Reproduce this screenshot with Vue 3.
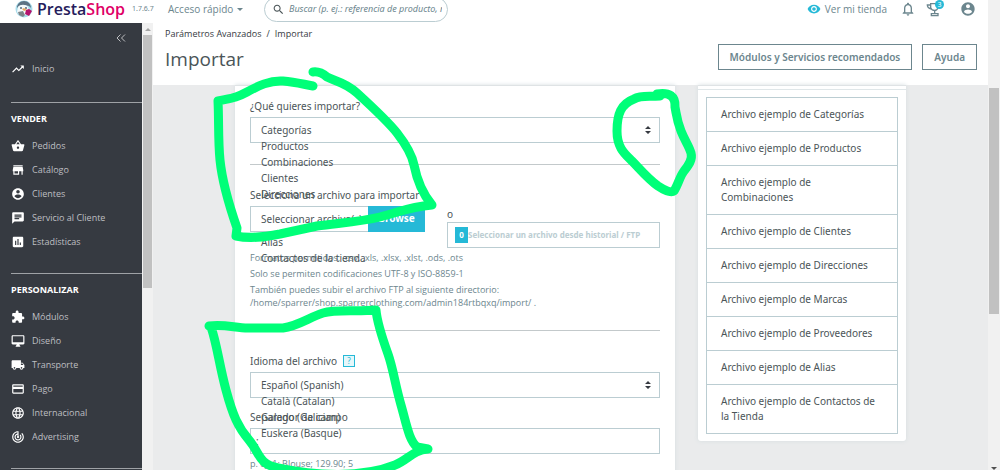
<script setup>
import { ref } from 'vue'

const icons = {
  trend: 'M16 6l2.29 2.29-4.88 4.88-4-4L2 16.59 3.41 18l6-6 4 4 6.3-6.29L22 12V6z',
  basket: 'M17.21 9l-4.38-6.56c-.19-.28-.51-.42-.83-.42-.32 0-.64.14-.83.43L6.79 9H2c-.55 0-1 .45-1 1 0 .09.01.18.04.27l2.54 9.27c.23.84 1 1.46 1.92 1.46h13c.92 0 1.69-.62 1.93-1.46l2.54-9.27L23 10c0-.55-.45-1-1-1h-4.79zM9 9l3-4.4L15 9H9zm3 8c-1.1 0-2-.9-2-2s.9-2 2-2 2 .9 2 2-.9 2-2 2z',
  store: 'M20 4H4v2h16V4zm1 10v-2l-1-5H4l-1 5v2h1v6h10v-6h4v6h2v-6h1zm-9 4H6v-4h6v4z',
  account: 'M12 2C6.48 2 2 6.48 2 12s4.48 10 10 10 10-4.48 10-10S17.52 2 12 2zm0 3c1.66 0 3 1.34 3 3s-1.34 3-3 3-3-1.34-3-3 1.34-3 3-3zm0 14.2c-2.5 0-4.71-1.28-6-3.22.03-1.99 4-3.08 6-3.08 1.99 0 5.97 1.09 6 3.08-1.29 1.94-3.5 3.22-6 3.22z',
  chat: 'M20 2H4c-1.1 0-1.99.9-1.99 2L2 22l4-4h14c1.1 0 2-.9 2-2V4c0-1.1-.9-2-2-2zM6 9h12v2H6V9zm8 5H6v-2h8v2zm4-6H6V6h12v2z',
  stats: 'M19 3H5c-1.1 0-2 .9-2 2v14c0 1.1.9 2 2 2h14c1.1 0 2-.9 2-2V5c0-1.1-.9-2-2-2zM9 17H7v-7h2v7zm4 0h-2V7h2v10zm4 0h-2v-4h2v4z',
  puzzle: 'M20.5 11H19V7c0-1.1-.9-2-2-2h-4V3.5C13 2.12 11.88 1 10.5 1S8 2.12 8 3.5V5H4c-1.1 0-1.99.9-1.99 2v3.8H3.5c1.49 0 2.7 1.21 2.7 2.7s-1.21 2.7-2.7 2.7H2V20c0 1.1.9 2 2 2h3.8v-1.5c0-1.49 1.21-2.7 2.7-2.7 1.49 0 2.7 1.21 2.7 2.7V22H17c1.1 0 2-.9 2-2v-4h1.5c1.38 0 2.5-1.12 2.5-2.5S21.88 11 20.5 11z',
  desktop: 'M21 2H3c-1.1 0-2 .9-2 2v12c0 1.1.9 2 2 2h7l-2 3v1h8v-1l-2-3h7c1.1 0 2-.9 2-2V4c0-1.1-.9-2-2-2zm0 12H3V4h18v10z',
  truck: 'M20 8h-3V4H3c-1.1 0-2 .9-2 2v11h2c0 1.66 1.34 3 3 3s3-1.34 3-3h6c0 1.66 1.34 3 3 3s3-1.34 3-3h2v-5l-3-4zM6 18.5c-.83 0-1.5-.67-1.5-1.5s.67-1.5 1.5-1.5 1.5.67 1.5 1.5-.67 1.5-1.5 1.5zm13.5-9l1.96 2.5H17V9.5h2.5zm-1.5 9c-.83 0-1.5-.67-1.5-1.5s.67-1.5 1.5-1.5 1.5.67 1.5 1.5-.67 1.5-1.5 1.5z',
  card: 'M20 4H4c-1.11 0-1.99.89-1.99 2L2 18c0 1.11.89 2 2 2h16c1.11 0 2-.89 2-2V6c0-1.11-.89-2-2-2zm0 14H4v-6h16v6zm0-10H4V6h16v2z',
  globe: 'M11.99 2C6.47 2 2 6.48 2 12s4.47 10 9.99 10C17.52 22 22 17.52 22 12S17.52 2 11.99 2zm6.93 6h-2.95c-.32-1.25-.78-2.45-1.38-3.56 1.84.63 3.37 1.91 4.33 3.56zM12 4.04c.83 1.2 1.48 2.53 1.91 3.96h-3.82c.43-1.43 1.08-2.76 1.91-3.96zM4.26 14C4.1 13.36 4 12.69 4 12s.1-1.36.26-2h3.38c-.08.66-.14 1.32-.14 2 0 .68.06 1.34.14 2H4.26zm.82 2h2.95c.32 1.25.78 2.45 1.38 3.56-1.84-.63-3.37-1.9-4.33-3.56zm2.95-8H5.08c.96-1.66 2.49-2.93 4.33-3.56C8.81 5.55 8.35 6.75 8.03 8zM12 19.96c-.83-1.2-1.48-2.53-1.91-3.96h3.82c-.43 1.43-1.08 2.76-1.91 3.96zM14.34 14H9.66c-.09-.66-.16-1.32-.16-2 0-.68.07-1.35.16-2h4.68c.09.65.16 1.32.16 2 0 .68-.07 1.34-.16 2zm.25 5.56c.6-1.11 1.06-2.31 1.38-3.56h2.95c-.96 1.65-2.49 2.93-4.33 3.56zM16.36 14c.08-.66.14-1.32.14-2 0-.68-.06-1.34-.14-2h3.38c.16.64.26 1.31.26 2s-.1 1.36-.26 2h-3.38z',
  target: 'M19.07 4.93l-1.41 1.41C19.1 7.79 20 9.79 20 12c0 4.42-3.58 8-8 8s-8-3.58-8-8c0-4.08 3.05-7.44 7-7.93v2.02C8.16 6.57 6 9.03 6 12c0 3.31 2.69 6 6 6s6-2.69 6-6c0-1.66-.67-3.16-1.76-4.24l-1.41 1.41C15.55 9.9 16 10.9 16 12c0 2.21-1.79 4-4 4s-4-1.79-4-4c0-1.86 1.28-3.41 3-3.86v2.14c-.6.35-1 .98-1 1.72 0 1.1.9 2 2 2s2-.9 2-2c0-.74-.4-1.38-1-1.72V2h-1C6.48 2 2 6.48 2 12s4.48 10 10 10 10-4.48 10-10c0-2.76-1.12-5.26-2.93-7.07z',
  eye: 'M12 4.5C7 4.5 2.73 7.61 1 12c1.73 4.39 6 7.5 11 7.5s9.27-3.11 11-7.5c-1.73-4.39-6-7.5-11-7.5zM12 17c-2.76 0-5-2.24-5-5s2.24-5 5-5 5 2.24 5 5-2.24 5-5 5zm0-8c-1.66 0-3 1.34-3 3s1.34 3 3 3 3-1.34 3-3-1.34-3-3-3z',
  bell: 'M12 22c1.1 0 2-.9 2-2h-4c0 1.1.9 2 2 2zm6-6v-5c0-3.07-1.63-5.64-4.5-6.32V4c0-.83-.67-1.5-1.5-1.5s-1.5.67-1.5 1.5v.68C7.64 5.36 6 7.92 6 11v5l-2 2v1h16v-1l-2-2zm-2 1H8v-6c0-2.48 1.51-4.5 4-4.5s4 2.02 4 4.5v6z',
  search: 'M15.5 14h-.79l-.28-.27C15.41 12.59 16 11.11 16 9.5 16 5.91 13.09 3 9.5 3S3 5.91 3 9.5 5.91 16 9.5 16c1.61 0 3.09-.59 4.23-1.57l.27.28v.79l5 4.99L20.49 19l-4.99-5zm-6 0C7.01 14 5 11.99 5 9.5S7.01 5 9.5 5 14 7.01 14 9.5 11.99 14 9.5 14z'
}

const menu = [
  {
    title: 'VENDER',
    items: [
      { icon: 'basket', label: 'Pedidos' },
      { icon: 'store', label: 'Catálogo' },
      { icon: 'account', label: 'Clientes' },
      { icon: 'chat', label: 'Servicio al Cliente' },
      { icon: 'stats', label: 'Estadísticas' }
    ]
  },
  {
    title: 'PERSONALIZAR',
    items: [
      { icon: 'puzzle', label: 'Módulos' },
      { icon: 'desktop', label: 'Diseño' },
      { icon: 'truck', label: 'Transporte' },
      { icon: 'card', label: 'Pago' },
      { icon: 'globe', label: 'Internacional' },
      { icon: 'target', label: 'Advertising' }
    ]
  }
]

const entities = ['Categorías', 'Productos', 'Combinaciones', 'Clientes', 'Direcciones', 'Marcas', 'Proveedores', 'Alias', 'Contactos de la tienda']
const languages = ['Español (Spanish)', 'Català (Catalan)', 'Galego (Galician)', 'Euskera (Basque)']
const samples = ['Categorías', 'Productos', 'Combinaciones', 'Clientes', 'Direcciones', 'Marcas', 'Proveedores', 'Alias', 'Contactos de la Tienda']

const entity = ref(entities[0])
const language = ref(languages[0])
const separator = ref(';')
</script>

<template>
  <div class="page">
    <div class="app">
      <header class="topbar">
        <a class="brand" href="#">
          <svg class="mascot" viewBox="0 0 18 18" aria-hidden="true">
            <circle cx="9" cy="9" r="8.5" fill="#a9dceb" />
            <path d="M2 8C2 4 5 1 9 1s7 3 7 7l-2-2-5-1-5 1z" fill="#5d7384" />
            <path d="M3 7c2-3 8-3 10 0l1 4-3 4H5l-3-3z" fill="#f4fafb" />
            <circle cx="6" cy="8" r="1" fill="#54687a" />
            <circle cx="11" cy="8" r="1" fill="#54687a" />
            <path d="M7 9l2-1 3 2-3 1z" fill="#e8a860" />
            <path d="M3 12l5-1 2 4-2 2-4-2z" fill="#7d8388" />
            <path d="M11 10l3-1 3 2-3 5-4-2z" fill="#b5136d" />
          </svg>
          <span class="wordmark">Presta<span class="shop">Shop</span></span>
        </a>
        <span class="version">1.7.6.7</span>
        <button class="quick" type="button">Acceso rápido <span class="caret"></span></button>
        <form class="search" role="search" @submit.prevent>
          <svg class="search-icon" viewBox="0 0 24 24" aria-hidden="true"><path :d="icons.search" /></svg>
          <input type="text" aria-label="Buscar" placeholder="Buscar (p. ej.: referencia de producto, nombre" />
        </form>
        <a class="shop-link" href="#">
          <svg viewBox="0 0 24 24" aria-hidden="true"><path :d="icons.eye" /></svg>Ver mi tienda
        </a>
        <button class="tool" type="button" aria-label="Notificaciones">
          <svg viewBox="0 0 24 24" aria-hidden="true"><path :d="icons.bell" /></svg>
        </button>
        <button class="tool" type="button" aria-label="Logros">
          <svg class="trophy" viewBox="0 0 24 24" aria-hidden="true">
            <path d="M7 4h10l1 6c-1 3-3 4-5 4s-5-1-6-4zM7 6H2c0 4 2 5 6 6M13 14v5M8 22v-3h10v3z" />
          </svg>
          <span class="badge">3</span>
        </button>
        <button class="tool account" type="button" aria-label="Cuenta">
          <svg viewBox="0 0 24 24" aria-hidden="true"><path :d="icons.account" /></svg>
        </button>
      </header>

      <div class="body">
        <nav class="sidebar" aria-label="Menú principal">
          <button class="collapse" type="button" aria-label="Contraer menú">
            <svg viewBox="0 0 10 8" aria-hidden="true"><path d="M4.500.5L1 4l3.500 3.500M9 .5L5.500 4 9 7.500" /></svg>
          </button>
          <a class="item home" href="#">
            <svg viewBox="0 0 24 24" aria-hidden="true"><path :d="icons.trend" /></svg>Inicio
          </a>
          <section v-for="group in menu" :key="group.title" class="group">
            <h2>{{ group.title }}</h2>
            <ul>
              <li v-for="item in group.items" :key="item.label">
                <a class="item" href="#">
                  <svg viewBox="0 0 24 24" aria-hidden="true"><path :d="icons[item.icon]" /></svg>{{ item.label }}
                </a>
              </li>
            </ul>
          </section>
          <div class="group"></div>
        </nav>
        <div class="side-scroll" aria-hidden="true">
          <span class="arrow up"></span>
          <span class="side-thumb"></span>
        </div>

        <main class="main">
          <div class="heading">
            <div>
              <nav class="crumbs" aria-label="Ruta">
                <a href="#">Parámetros Avanzados</a><span>/</span><a href="#">Importar</a>
              </nav>
              <h1>Importar</h1>
            </div>
            <div class="actions">
              <button type="button">Módulos y Servicios recomendados</button>
              <button type="button">Ayuda</button>
            </div>
          </div>

          <div class="content">
            <form class="card form" @submit.prevent>
              <div class="field">
                <label for="entity">¿Qué quieres importar?</label>
                <div class="select">
                  <select id="entity" v-model="entity">
                    <option v-for="name in entities" :key="name">{{ name }}</option>
                  </select>
                  <svg viewBox="0 0 6 8" aria-hidden="true"><path d="M0 3l3-3 3 3zM0 5h6L3 8z" /></svg>
                  <ul class="spill">
                    <li v-for="name in entities.slice(1)" :key="name">{{ name }}</li>
                  </ul>
                </div>
              </div>
              <hr />
              <div class="field">
                <label for="file">Selecciona un archivo para importar</label>
                <div class="sources">
                  <div class="file">
                    <input id="file" type="file" />
                    <span class="file-name">Seleccionar archivo(s)</span>
                    <span class="browse">Browse</span>
                  </div>
                  <div class="history">
                    <span class="or">o</span>
                    <button type="button"><span class="count">0</span><span class="history-text">Seleccionar un archivo desde historial / FTP</span></button>
                  </div>
                </div>
                <p>Formatos permitidos: .csv, .xls, .xlsx, .xlst, .ods, .ots</p>
                <p>Solo se permiten codificaciones UTF-8 y ISO-8859-1</p>
                <p>También puedes subir el archivo FTP al siguiente directorio:<br />/home/sparrer/shop.sparrerclothing.com/admin184rtbqxq/import/ .</p>
              </div>
              <hr />
              <div class="field">
                <div class="label-row">
                  <label for="language">Idioma del archivo</label>
                  <button class="help" type="button" aria-label="Ayuda sobre el idioma">?</button>
                </div>
                <div class="select">
                  <select id="language" v-model="language">
                    <option v-for="name in languages" :key="name">{{ name }}</option>
                  </select>
                  <svg viewBox="0 0 6 8" aria-hidden="true"><path d="M0 3l3-3 3 3zM0 5h6L3 8z" /></svg>
                  <ul class="spill">
                    <li v-for="name in languages.slice(1)" :key="name">{{ name }}</li>
                  </ul>
                </div>
              </div>
              <div class="field next">
                <label for="separator">Separador de campo</label>
                <input id="separator" v-model="separator" class="text" type="text" />
                <p>p. ej. 1; Blouse; 129.90; 5</p>
              </div>
            </form>

            <aside class="card samples">
              <ul>
                <li v-for="name in samples" :key="name"><a href="#">Archivo ejemplo de {{ name }}</a></li>
              </ul>
            </aside>
          </div>
        </main>
      </div>
    </div>

    <div class="page-scroll" aria-hidden="true">
      <span class="page-thumb"></span>
      <span class="arrow down"></span>
    </div>

    <svg class="marker" viewBox="0 0 1000 470" aria-hidden="true">
      <path d="M313 86C302 84 296 82 283 81S258 86 247 92S232 98 218 101C219 120 218 140 220 160S229 205 237 228L236 236C250 239 264 237 280 234L317 226C338 223 360 222 380 217S408 207 432 205C420 191 416 175 414 165S404 142 397 133S369 104 357 93S337 82 327 77Q320 71 313 72" />
      <path d="M657 94Q676 91 675 107C677 118 677 121 681 131S689 146 691 153S688 166 684 171S678 185 674 191Q670 194 658 186C648 179 639 168 632 161S617 148 617 131S621 104 634 99C641 95 648 97 660 96" />
      <path d="M209 326C225 324 235 328 248 328H283C298 326 310 317 323 313S357 312 376 310C377 322 383 340 388 354S395 384 401 405S409 440 417 447L428 449C413 450 408 460 395 465C363 478 315 476 278 468C258 464 260 453 249 440S233 416 226 390S217 344 211 327" />
    </svg>
  </div>
</template>

<style>
body {
  margin: 0;
  overflow: hidden;
}
</style>

<style scoped>
* {
  box-sizing: border-box;
}
.page {
  position: relative;
  display: flex;
  height: 100vh;
  overflow: hidden;
  font-family: "Noto Sans", "Open Sans", sans-serif;
  font-size: 10px;
  line-height: 16px;
  color: #4b5558;
  background: #fff;
}
button,
input,
select {
  font: inherit;
  color: inherit;
}
button {
  padding: 0;
  border: 0;
  background: none;
}
a {
  color: inherit;
  text-decoration: none;
}
ul {
  margin: 0;
  padding: 0;
  list-style: none;
}
h1,
h2,
p {
  margin: 0;
}
.app {
  display: flex;
  flex: 1;
  flex-direction: column;
  min-width: 0;
}
.topbar {
  display: flex;
  flex: none;
  align-items: center;
  height: 23px;
  padding: 0 12px 5px 15px;
  color: #6c868e;
  font-size: 9px;
}
.brand {
  display: flex;
  align-items: center;
  gap: 4px;
  width: 117px;
}
.mascot {
  flex: none;
  width: 18px;
  height: 18px;
}
.wordmark {
  color: #251b5b;
  font-family: "Open Sans", sans-serif;
  font-size: 16px;
  font-weight: 600;
  line-height: 18px;
}
.shop {
  color: #df0067;
}
.version {
  width: 36px;
  font-size: 7px;
}
.quick {
  display: flex;
  align-items: center;
  gap: 4px;
  width: 96px;
  font-family: "Open Sans", sans-serif;
  font-size: 10px;
  white-space: nowrap;
}
.caret {
  border: 3px solid transparent;
  border-top-color: #6c868e;
  border-bottom: 0;
}
.search {
  display: flex;
  flex: none;
  align-items: center;
  gap: 4px;
  width: 184px;
  height: 25px;
  padding: 0 5px 0 7px;
  border: 1px solid #bbcdd2;
  border-radius: 13px;
}
.search-icon {
  flex: none;
  width: 13px;
  height: 13px;
  fill: #4b5558;
}
.search input {
  flex: 1;
  min-width: 0;
  padding: 0;
  border: 0;
  outline: 0;
  background: none;
  font-style: italic;
}
.search input::placeholder {
  color: #6c868e;
}
.shop-link {
  display: flex;
  align-items: center;
  gap: 4px;
  margin-left: auto;
  margin-right: 13px;
  font-family: "Open Sans", sans-serif;
  font-size: 10px;
  white-space: nowrap;
}
.shop-link svg {
  width: 14px;
  height: 14px;
  fill: #25b9d7;
}
.tool {
  position: relative;
  display: flex;
  margin-right: 10px;
}
.tool svg {
  width: 16px;
  height: 16px;
  fill: #6c868e;
}
.tool .trophy {
  fill: none;
  stroke: #6c868e;
  stroke-width: 2;
}
.tool.account {
  margin: 0 0 0 8px;
}
.badge {
  position: absolute;
  top: -1px;
  right: -2px;
  width: 9px;
  height: 9px;
  border-radius: 50%;
  background: #25b9d7;
  color: #fff;
  font-size: 7px;
  line-height: 9px;
  text-align: center;
}
.body {
  display: flex;
  flex: 1;
  min-height: 0;
}
.sidebar {
  display: flex;
  flex: none;
  flex-direction: column;
  width: 142px;
  padding-left: 11px;
  overflow: hidden;
  background: #363a41;
  color: #bebfc2;
  font-family: "Open Sans", sans-serif;
  font-size: 9px;
}
.sidebar > * {
  flex: none;
}
.collapse {
  align-self: flex-end;
  height: 32px;
  margin: 0 16px 2px 0;
}
.collapse svg {
  width: 10px;
  height: 8px;
  fill: none;
  stroke: #bebfc2;
}
.item {
  display: flex;
  align-items: center;
  gap: 7px;
  height: 24px;
}
.item svg {
  width: 14px;
  height: 14px;
  fill: #fff;
}
.home {
  margin-bottom: 21px;
}
.group {
  padding: 8px 0 19px;
  border-top: 1px solid #9fa2a6;
}
.group h2 {
  margin-bottom: 7px;
  color: #fff;
  font-size: 9px;
  line-height: 16px;
}
.side-scroll {
  flex: none;
  width: 11px;
  background: #f1f1f1;
}
.side-thumb {
  display: block;
  height: 253px;
  margin: 0 1px;
  background: #c1c1c1;
}
.arrow {
  display: block;
  width: 0;
  height: 0;
  border: 3px solid transparent;
}
.arrow.up {
  margin: 2px auto 4px;
  border-bottom-color: #a3a3a3;
}
.arrow.down {
  margin: auto auto 0;
  border-width: 3px 3px 0;
  border-top-color: #505050;
}
.main {
  flex: 1;
  min-width: 0;
  overflow: hidden;
  background: #eaebec;
}
.heading {
  display: flex;
  justify-content: space-between;
  height: 62px;
  padding: 3px 11px 0 12px;
  background: #fff;
}
.crumbs {
  display: flex;
  gap: 5px;
  color: #363a41;
  font-family: "Open Sans", sans-serif;
  font-size: 9px;
}
h1 {
  font-family: "Open Sans", sans-serif;
  font-size: 19px;
  font-weight: 400;
  line-height: 34px;
}
.actions {
  display: flex;
  gap: 10px;
  margin-top: 18px;
}
.actions button {
  height: 26px;
  padding: 0 11px;
  border: 1px solid #6c868e;
  color: #6c868e;
  font-weight: 600;
}
.content {
  display: grid;
  grid-template-columns: 440fr 208fr;
  align-items: start;
  gap: 23px;
  padding: 0 82px;
}
.card {
  min-width: 0;
  border-top: 1px solid #dfe3e5;
  background: #fff;
  box-shadow: 0 0 4px #d5dde0;
}
.form {
  padding: 12px 15px 10px;
}
.field > label,
.label-row {
  display: block;
  margin-bottom: 3px;
}
.label-row {
  display: flex;
  align-items: center;
  gap: 6px;
}
.help {
  width: 12px;
  height: 12px;
  border: 1px solid #25b9d7;
  background: #e5f7fa;
  color: #25b9d7;
  font-size: 8px;
  line-height: 10px;
}
.select {
  position: relative;
}
select,
.text {
  display: block;
  width: 100%;
  height: 26px;
  border: 1px solid #bbcdd2;
  border-radius: 0;
  background: #fff;
}
select {
  padding: 0 10px;
  appearance: none;
}
.text {
  padding: 0 5px;
}
.select svg {
  position: absolute;
  top: 9px;
  right: 9px;
  width: 6px;
  height: 8px;
  fill: #363a41;
}
.spill {
  position: absolute;
  top: 21px;
  left: 11px;
}
hr {
  height: 1px;
  margin: 21px 0 22px;
  border: 0;
  background: #c3c9cb;
}
.next {
  margin-top: 11px;
}
.sources {
  display: grid;
  grid-template-columns: minmax(0, 175fr) minmax(0, 213fr);
  gap: 22px;
  align-items: start;
}
.file {
  position: relative;
  z-index: 1;
  display: flex;
  height: 26px;
  background: #fff;
}
.file input {
  position: absolute;
  inset: 0;
  width: 100%;
  opacity: 0;
}
.file-name {
  flex: 1;
  min-width: 0;
  padding: 4px 0 4px 10px;
  overflow: hidden;
  border: 1px solid #bbcdd2;
  border-right: 0;
  line-height: 16px;
  white-space: nowrap;
}
.browse {
  flex: none;
  width: 57px;
  background: #25b9d7;
  color: #fff;
  font-weight: 700;
  line-height: 25px;
  text-align: center;
}
.history .or {
  display: block;
  line-height: 16px;
}
.history button {
  display: flex;
  align-items: center;
  width: 100%;
  height: 26px;
  padding: 0 7px;
  border: 1px solid #bbcdd2;
  background: #fff;
  color: #bbcdd2;
  font-size: 8px;
  font-weight: 700;
}
.count {
  flex: none;
  width: 13px;
  background: #25b9d7;
  color: #fff;
  line-height: 16px;
}
.history-text {
  white-space: nowrap;
}
.field p {
  margin-top: 3px;
  color: #6c868e;
  font-family: "Open Sans", sans-serif;
  font-size: 9px;
  line-height: 13px;
  white-space: nowrap;
}
.samples {
  padding: 3px 0 7px;
  border-radius: 0 0 3px 3px;
}
.samples::before {
  display: block;
  height: 1px;
  margin-bottom: 7px;
  background: #dfe6e8;
  content: "";
}
.samples ul {
  margin: 0 8px;
  border: 1px solid #bbcdd2;
  line-height: 15px;
}
.samples li {
  padding: 9px 14px;
}
.samples li + li {
  border-top: 1px solid #bbcdd2;
}
.page-scroll {
  display: flex;
  flex: none;
  flex-direction: column;
  width: 12px;
  padding: 88px 1px 0;
  background: #f1f1f1;
}
.page-thumb {
  height: 226px;
  background: #c1c1c1;
}
.marker {
  position: absolute;
  top: 0;
  left: 0;
  z-index: 5;
  width: 1000px;
  height: 470px;
  fill: none;
  stroke: #00ff78;
  stroke-width: 9;
  stroke-linecap: round;
  stroke-linejoin: round;
  pointer-events: none;
}
</style>
